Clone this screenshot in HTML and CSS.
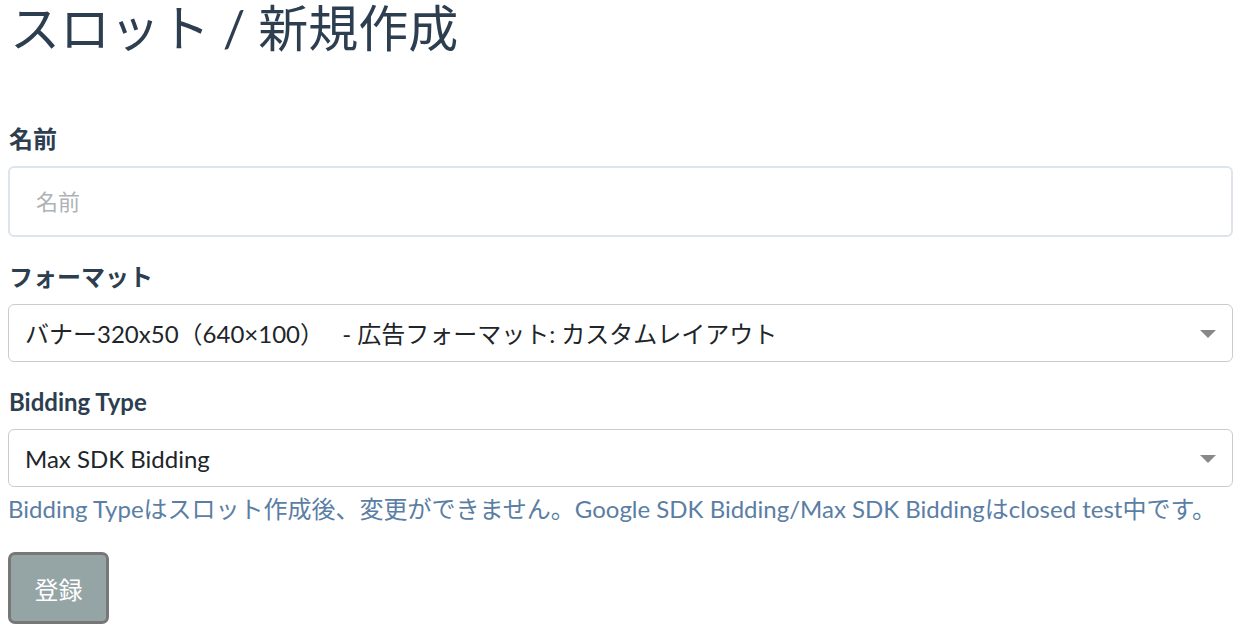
FILE: index.html
```html
<!DOCTYPE html>
<html lang="ja">
<head>
  <meta charset="UTF-8">
  <meta name="viewport" content="width=device-width, initial-scale=1">
  <title>スロット / 新規作成</title>
  <link rel="stylesheet" href="styles.css">
</head>
<body>
<main class="page">
  <h1 class="page-title">スロット / 新規作成</h1>

  <form class="slot-form">
    <div class="form-group">
      <label class="form-label" for="slot-name">名前</label>
      <input class="form-input" id="slot-name" type="text" placeholder="名前">
    </div>

    <div class="form-group">
      <label class="form-label" for="slot-format">フォーマット</label>
      <div class="select-wrap">
        <select class="form-select" id="slot-format">
          <option>バナー320x50（640×100）　 - 広告フォーマット: カスタムレイアウト</option>
        </select>
      </div>
    </div>

    <div class="form-group">
      <label class="form-label" for="bidding-type">Bidding Type</label>
      <div class="select-wrap">
        <select class="form-select" id="bidding-type">
          <option>Max SDK Bidding</option>
        </select>
      </div>
      <p class="form-help">Bidding Typeはスロット作成後、変更ができません。Google SDK Bidding/Max SDK Biddingはclosed test中です。</p>
    </div>

    <button class="btn-submit" type="submit">登録</button>
  </form>
</main>
</body>
</html>
```

FILE: styles.css
```css
html,
body {
  margin: 0;
  background: #fff;
}
body {
  font-family: Lato, "Noto Sans CJK JP", sans-serif;
  color: #212529;
  font-size: 24px;
}
.page {
  padding: 0 8px;
}
.page-title {
  margin: 0;
  padding-left: 2px;
  font-size: 50px;
  font-weight: 400;
  line-height: 56px;
  color: #2c3e50;
}
.slot-form {
  margin-top: 69px;
}
.form-group {
  margin-bottom: 26px;
}
.form-label {
  display: block;
  margin-bottom: 13px;
  padding-left: 1px;
  font-weight: 700;
  line-height: 28px;
  color: #2c3e50;
}
.form-input {
  box-sizing: border-box;
  display: block;
  width: 100%;
  height: 71px;
  padding: 0 26px;
  border: 2px solid #dde4ee;
  border-radius: 6px;
  font: inherit;
  font-size: 22px;
  color: #212529;
  outline: none;
}
.form-input::placeholder {
  color: #aeb2b6;
}
.select-wrap {
  position: relative;
}
.select-wrap::after {
  content: "";
  position: absolute;
  right: 17px;
  top: 50%;
  margin-top: -3px;
  border-left: 8px solid transparent;
  border-right: 8px solid transparent;
  border-top: 8px solid #888;
  pointer-events: none;
}
.form-select {
  box-sizing: border-box;
  display: block;
  width: 100%;
  height: 58px;
  padding: 0 16px;
  border: 1px solid #ccc;
  border-radius: 6px;
  background: #fff;
  font: inherit;
  color: #212529;
  appearance: none;
  -webkit-appearance: none;
}
.form-help {
  margin: 8px 0 0;
  line-height: 28px;
  color: #5a7ea4;
}
.btn-submit {
  box-sizing: border-box;
  width: 101px;
  height: 72px;
  margin-top: 3px;
  border: 3px solid #777;
  border-radius: 7px;
  background: #95a5a6;
  color: #fff;
  font: inherit;
}
```
